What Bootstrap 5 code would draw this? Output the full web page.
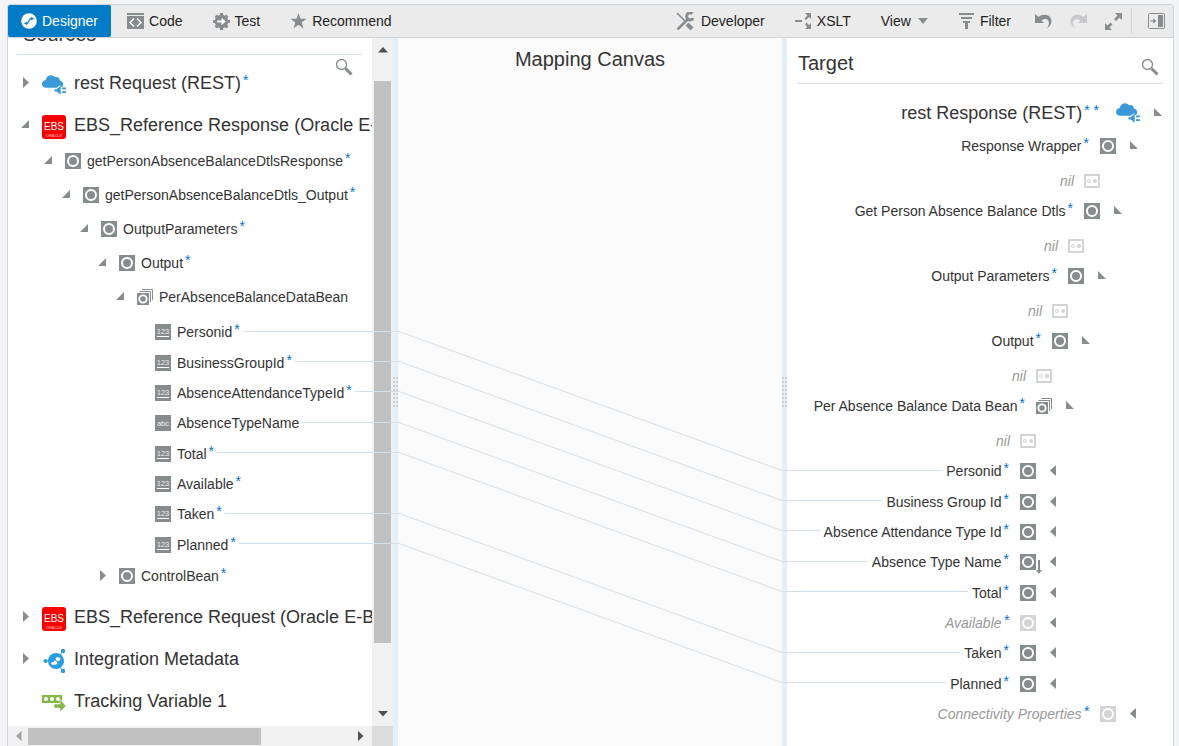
<!DOCTYPE html>
<html lang="en">
<head>
<meta charset="utf-8">
<meta name="viewport" content="width=device-width, initial-scale=1">
<title>Mapper</title>
<link href="https://cdn.jsdelivr.net/npm/bootstrap@5.3.0/dist/css/bootstrap.min.css" rel="stylesheet">
<style>
:root { --ink:#333; --icon:#878c8f; --blue:#0572ce; --edge:#d0d4d7; --wire:#d5dfe7; --scroll:#c1c1c1; }
body { font-family:"Liberation Sans",Arial,sans-serif; font-size:14px; line-height:20px; color:var(--ink); background:#f3f4f6; }
button { border:0; padding:0; background:none; color:inherit; }
svg { display:block; flex:none; }
.mapper { margin:4px 5px 0 7px; border:1px solid var(--edge); border-bottom:0; border-radius:4px 4px 0 0; background:#fff; }
.tools { height:33px; background:#ebebeb; border-bottom:1px solid var(--edge); color:#222; }
.tool { display:flex; align-items:center; gap:5px; height:32px; padding:0 15px; white-space:nowrap; }
.tools-end .tool { gap:6px; }
.tool svg, .glass { color:var(--icon); }
.tool.current { background:#027bc7; color:#fff; padding:0 13px; border-radius:2px; margin-right:1px; }
.tool.current svg { color:#fff; }
.tools-end .tool-small { padding:0 9px; }
.divider { width:1px; height:26px; background:#d3d3d3; }
.source-pane { width:385px; }
.target-pane { width:386px; }
.pane-title { font-size:20px; line-height:24px; font-weight:400; margin:0; }
.source-title { margin:-16px 10px 0 9px; padding:0 6px 8px; border-bottom:1px solid #d3dfe6; }
.source-glass { position:absolute; top:20px; right:19px; }
.target-title { margin:0 10px; padding:12px 4px 7px 1px; border-bottom:1px solid #d8dfe3; }
.splitter { width:5px; background:#e3f0fa; }
.grip { width:5px; height:31px; background:repeating-linear-gradient(#c9ced2 0 2px,transparent 2px 4px); }
.grip::after { content:""; display:block; width:1px; height:31px; margin-left:2px; background:#e3f0fa; }
.canvas { background:#fafafa; }
.canvas .pane-title { padding-top:9px; }
.wires { position:absolute; left:-26px; top:0; width:calc(100% + 31px); height:708px; fill:none; stroke:var(--wire); pointer-events:none; z-index:2; }
.wire { flex:1 1 0; height:1px; background:var(--wire); margin-bottom:2px; }

.tree, .tree ul { list-style:none; margin:0; padding:0; }
.node { display:flex; align-items:center; height:34px; white-space:nowrap; }
.caption { display:flex; gap:2px; }
.caption b { color:var(--blue); font-weight:400; line-height:14px; }
.node svg { color:var(--icon); }
.twist { flex:none; }
.root { font-size:18px; height:38px; }
.root .caption b { font-size:14px; }
.leaves { display:flex; flex-direction:column; height:243px; }
.leaves > li { flex:1; display:flex; flex-direction:column; justify-content:center; }
.leaves .node { height:30px; }

.source-tree { padding:9px 0 0 12px; }
.source-tree > li { margin-bottom:4px; }
.source-tree .twist { width:22px; }
.source-tree .caption { margin-left:6px; }
.source-tree .root .caption { margin-left:8px; }
.source-tree .big { margin-top:4px; }
.source-tree > li > ul { padding:0 0 2px 23px; }
.source-tree ul ul { padding-left:18px; }
.source-tree ul .leaves { padding-left:40px; margin-top:3px; }
.source-tree .wire { margin-left:3px; }
.source-tree .short { height:32px; }

.target-tree { padding:11px 9px 0 0; }
.target-tree .node { height:30px; justify-content:flex-end; }
.target-tree .root { height:36px; }
.target-tree .nil { height:35px; padding:4px 24px 0 0; }
.target-tree .twist { width:24px; padding-left:13px; }
.target-tree .caption { margin-right:11px; }
.target-tree .root .caption { margin-right:17px; }
.target-tree .nil .caption { margin-right:10px; }
.target-tree > li > ul { padding-right:24px; }
.target-tree ul ul { padding-right:16px; }
.target-tree .wire { margin-right:4px; }
.faint { font-style:italic; color:#999; }
.node.faint svg.kind { color:#d2d4d5; }
.sorted { position:relative; }
.sorted .down { position:absolute; left:16px; top:6px; }

.vbar { width:21px; background:#f1f1f1; padding:9px 2px; align-items:center; }
.vbar .thumb { width:17px; height:562px; background:var(--scroll); margin-top:28px; }
.hbar { height:20px; background:#f1f1f1; }
.hbar .thumb { width:233px; height:17px; background:var(--scroll); margin-left:6px; }
.corner { width:21px; height:20px; background:#dcdcdc; }
</style>
</head>
<body class="vh-100 overflow-hidden d-flex flex-column">

<svg class="d-none" aria-hidden="true">
  <symbol id="obj" viewBox="0 0 16 16"><path fill="currentColor" d="M0 0h16v16H0z"/><circle cx="8" cy="8" r="5" fill="none" stroke="#fff" stroke-width="2"/></symbol>
  <symbol id="many" viewBox="0 0 16 16"><path fill="none" stroke="currentColor" d="M5 .5h10.500v10.500M2.500 2.500h11v10.500"/><path fill="currentColor" d="M0 4h12v12H0z"/><circle cx="6" cy="10" r="3.700" fill="none" stroke="#fff" stroke-width="1.800"/></symbol>
  <symbol id="num" viewBox="0 0 16 16"><path fill="currentColor" d="M0 0h16v16H0z"/><path fill="#fff" d="M2 12h12v1H2z"/><text x="8" y="9.500" text-anchor="middle" font-size="7.500" fill="#eee">123</text></symbol>
  <symbol id="abc" viewBox="0 0 16 16"><path fill="currentColor" d="M0 0h16v16H0z"/><text x="8" y="11" text-anchor="middle" font-size="7.500" fill="#eee">abc</text></symbol>
  <symbol id="nilbox" viewBox="0 0 16 14"><path fill="none" stroke="currentColor" stroke-width="2" d="M1 1h14v12H1z"/><circle cx="5" cy="7" r="1.500" fill="none" stroke="currentColor"/><circle cx="11" cy="7" r="2" fill="currentColor"/></symbol>
  <symbol id="open" viewBox="0 0 12 12"><path fill="currentColor" d="M9 1v8H1z"/></symbol>
  <symbol id="shut" viewBox="0 0 12 12"><path fill="currentColor" d="M3 0l6 5.500L3 11z"/></symbol>
  <symbol id="topen" viewBox="0 0 10 12"><path fill="currentColor" d="M1 1v8h8z"/></symbol>
  <symbol id="tshut" viewBox="0 0 10 12"><path fill="currentColor" d="M7 0v11L1 5.500z"/></symbol>
  <symbol id="cloud" viewBox="0 0 24 20"><path fill="#3a99d8" d="M4.500 12.800C1.500 12.800 0 11 0 9 0 6.800 1.500 5.200 3.800 5 4.200 2 6.500.3 9 .3c1.800 0 3 .7 4 1.900C16 1.600 18 3.200 17.800 5.600c2.200.4 3.500 2 3.300 4-.1 1.300-.6 2.100-1.400 2.700L18 10.200 14.600 12.800z"/><path fill="#3a99d8" d="M12.500 14.200h2.200l4-3.700v9.300l-4-3.300h-2.200zM20 12.500h4v1.800h-4zm0 3.700h4V18h-4z"/></symbol>
  <symbol id="ebs" viewBox="0 0 24 24"><rect width="24" height="24" rx="3" fill="#f80000"/><text x="12" y="15" text-anchor="middle" font-size="10" fill="#fff">EBS</text><text x="12" y="22" text-anchor="middle" font-size="4" fill="#fcc">ORACLE</text></symbol>
  <symbol id="meta" viewBox="0 0 24 24"><g fill="#2a9ddf"><circle cx="14" cy="12" r="8"/><circle cx="3.500" cy="12" r="2"/><circle cx="21" cy="2" r="2.200"/><circle cx="21" cy="22" r="2.200"/></g><path stroke="#2a9ddf" d="M3 12h4M21 2l-3 4M21 22l-3-4"/><path fill="#fff" d="M9.500 15v-2h2l1-1.500 2 .5 1 2-1 1.500-4 .5zM13.500 10l1.500-2 2 .5 1.500 1-.5 2-3 .5z"/></symbol>
  <symbol id="track" viewBox="0 0 24 18"><path fill="#84b748" d="M0 1h20v8H0z"/><g fill="#fff"><circle cx="4" cy="5" r="2"/><circle cx="10" cy="5" r="2"/><circle cx="16" cy="5" r="2"/></g><path fill="#84b748" stroke="#fff" stroke-width=".6" d="M12 10h6V5.500l6 6.500-6 6v-4h-6z"/></symbol>
  <symbol id="glass" viewBox="0 0 18 18"><circle cx="6.500" cy="6.500" r="5" fill="none" stroke="currentColor" stroke-width="1.300"/><path stroke="currentColor" stroke-width="3" d="M10.500 10.500l6 6"/></symbol>
</svg>

<main class="mapper flex-grow-1 d-flex flex-column">
  <nav class="tools d-flex align-items-center" aria-label="Mapper tools">
    <button class="tool current"><svg width="16" height="16" viewBox="0 0 17 17"><circle cx="8.500" cy="8.500" r="8.300" fill="currentColor"/><path fill="none" stroke="#1c87d0" stroke-width="1.300" d="M4 11h3l3-5h3"/><path fill="#1c87d0" d="M3 11l3.500-2v4zM14 6l-3.500-2v4z"/></svg>Designer</button>
    <button class="tool"><svg width="17" height="16" viewBox="0 0 17 16"><path fill="currentColor" d="M0 0h17v2H0zM0 3h17v13H0z"/><path fill="none" stroke="#fff" stroke-width="1.300" d="M7 5.500L3 9.500l4 4M10 5.500l4 4-4 4"/></svg>Code</button>
    <button class="tool"><svg width="17" height="17" viewBox="0 0 16 16"><circle cx="8" cy="8" r="6.400" fill="currentColor"/><path stroke="currentColor" stroke-width="3" d="M8 0v16M0 8h16M2.500 2.500l11 11M13.500 2.500l-11 11"/><path fill="#fff" d="M4 7h4V4.500L12 8l-4 3.500V9H4z"/></svg>Test</button>
    <button class="tool"><svg width="17" height="16" viewBox="0 0 16 16"><path fill="currentColor" d="M8 0l2 5.800h6l-4.800 3.700L13 15.500l-5-3.700-5 3.700 1.800-6L0 5.800h6z"/></svg>Recommend</button>
    <div class="tools-end ms-auto d-flex align-items-center">
      <button class="tool"><svg width="19" height="18" viewBox="0 0 19 18"><path fill="none" stroke="currentColor" stroke-width="1.600" d="M1 1l9 9"/><path stroke="currentColor" stroke-width="4" d="M11 12l5 5"/><path stroke="currentColor" stroke-width="2.600" d="M1.500 17.500L12 7"/><path fill="none" stroke="currentColor" stroke-width="3" d="M16.500 1.500a3.600 3.600 0 1 0 .8 4.800"/></svg>Developer</button>
      <button class="tool"><svg width="16" height="16" viewBox="0 0 16 16"><path fill="currentColor" d="M0 7h7v2H0zM10 0h6v6l-2-2-3 3-1.500-1.500 3-3zM10 11l1.500-1.500 2.500 2.500 2-2v6h-6l2-2z"/></svg>XSLT</button>
      <button class="tool">View<svg width="12" height="8" viewBox="0 0 12 8"><path fill="currentColor" d="M1 1h10L6 7z"/></svg></button>
      <button class="tool"><svg width="15" height="16" viewBox="0 0 15 16"><path fill="currentColor" d="M0 0h15v2H0zM2 4h11v2H2zM4 8h7v2H4zM6 12v-2h3v6H6z"/></svg>Filter</button>
      <button class="tool tool-small" aria-label="Undo"><svg width="17" height="16" viewBox="0 0 17 16"><path fill="currentColor" d="M0 1l3.500 3C8 0 16 1 16.500 8c0 3-2 5.500-4.500 7.500 3-5 2.500-9-1.500-9.500-1.500 0-3 .5-4 1.500L9 10H0z"/></svg></button>
      <button class="tool tool-small" aria-label="Redo" disabled><svg width="17" height="16" viewBox="0 0 17 16" opacity=".35"><path fill="currentColor" d="M17 1l-3.500 3C9 0 1 1 .5 8c0 3 2 5.500 4.500 7.500C2 10.500 2.500 6.500 6.500 6c1.500 0 3 .5 4 1.500L8 10h9z"/></svg></button>
      <button class="tool tool-small" aria-label="Expand"><svg width="17" height="17" viewBox="0 0 17 17"><path fill="currentColor" d="M10 0h7v7l-2.500-2.500-3.500 3.500-2-2 3.500-3.500zM0 10l2.500 2.500L5.500 9.500l2 2-3 3L7 17H0z"/></svg></button>
      <span class="divider"></span>
      <button class="tool px-2 ms-2" aria-label="Toggle side panel"><svg width="17" height="17" viewBox="0 0 17 17"><rect x=".5" y=".5" width="16" height="15" rx="1" fill="none" stroke="currentColor"/><path fill="currentColor" d="M10 2h5v12h-5zM2 7.500h3V5.500l3.500 2.500L5 10.500V8.500H2z"/></svg></button>
    </div>
  </nav>

  <div class="flex-grow-1 d-flex overflow-hidden" style="min-height:0">
    <section class="source-pane flex-shrink-0 d-flex flex-column" aria-label="Sources">
      <div class="d-flex flex-grow-1" style="min-height:0">
        <div class="flex-grow-1 overflow-hidden position-relative" style="min-width:0">
          <h2 class="pane-title source-title">Sources</h2>
          <button class="glass source-glass" aria-label="Search sources"><svg width="18" height="18"><use href="#glass"/></svg></button>
          <ul class="tree source-tree">
            <li><div class="node root"><button class="twist" aria-label="Expand"><svg width="12" height="12"><use href="#shut"/></svg></button><svg class="big" width="24" height="20"><use href="#cloud"/></svg><span class="caption">rest Request (REST)<b>*</b></span></div></li>
            <li><div class="node root"><button class="twist" aria-label="Collapse"><svg width="12" height="12"><use href="#open"/></svg></button><svg class="big" width="24" height="24"><use href="#ebs"/></svg><span class="caption">EBS_Reference Response (Oracle E-</span></div>
              <ul>
                <li><div class="node"><button class="twist" aria-label="Collapse"><svg width="12" height="12"><use href="#open"/></svg></button><svg width="16" height="16"><use href="#obj"/></svg><span class="caption">getPersonAbsenceBalanceDtlsResponse<b>*</b></span></div>
                  <ul>
                    <li><div class="node"><button class="twist" aria-label="Collapse"><svg width="12" height="12"><use href="#open"/></svg></button><svg width="16" height="16"><use href="#obj"/></svg><span class="caption">getPersonAbsenceBalanceDtls_Output<b>*</b></span></div>
                      <ul>
                        <li><div class="node"><button class="twist" aria-label="Collapse"><svg width="12" height="12"><use href="#open"/></svg></button><svg width="16" height="16"><use href="#obj"/></svg><span class="caption">OutputParameters<b>*</b></span></div>
                          <ul>
                            <li><div class="node"><button class="twist" aria-label="Collapse"><svg width="12" height="12"><use href="#open"/></svg></button><svg width="16" height="16"><use href="#obj"/></svg><span class="caption">Output<b>*</b></span></div>
                              <ul>
                                <li><div class="node"><button class="twist" aria-label="Collapse"><svg width="12" height="12"><use href="#open"/></svg></button><svg width="16" height="16"><use href="#many"/></svg><span class="caption">PerAbsenceBalanceDataBean</span></div>
                                  <ul class="leaves">
                                    <li><div class="node"><svg width="16" height="16"><use href="#num"/></svg><span class="caption">Personid<b>*</b></span><span class="wire"></span></div></li>
                                    <li><div class="node"><svg width="16" height="16"><use href="#num"/></svg><span class="caption">BusinessGroupId<b>*</b></span><span class="wire"></span></div></li>
                                    <li><div class="node"><svg width="16" height="16"><use href="#num"/></svg><span class="caption">AbsenceAttendanceTypeId<b>*</b></span><span class="wire"></span></div></li>
                                    <li><div class="node"><svg width="16" height="16"><use href="#abc"/></svg><span class="caption">AbsenceTypeName</span><span class="wire"></span></div></li>
                                    <li><div class="node"><svg width="16" height="16"><use href="#num"/></svg><span class="caption">Total<b>*</b></span><span class="wire"></span></div></li>
                                    <li><div class="node"><svg width="16" height="16"><use href="#num"/></svg><span class="caption">Available<b>*</b></span></div></li>
                                    <li><div class="node"><svg width="16" height="16"><use href="#num"/></svg><span class="caption">Taken<b>*</b></span><span class="wire"></span></div></li>
                                    <li><div class="node"><svg width="16" height="16"><use href="#num"/></svg><span class="caption">Planned<b>*</b></span><span class="wire"></span></div></li>
                                  </ul>
                                </li>
                              </ul>
                            </li>
                            <li><div class="node short"><button class="twist" aria-label="Expand"><svg width="12" height="12"><use href="#shut"/></svg></button><svg width="16" height="16"><use href="#obj"/></svg><span class="caption">ControlBean<b>*</b></span></div></li>
                          </ul>
                        </li>
                      </ul>
                    </li>
                  </ul>
                </li>
              </ul>
            </li>
            <li><div class="node root"><button class="twist" aria-label="Expand"><svg width="12" height="12"><use href="#shut"/></svg></button><svg class="big" width="24" height="24"><use href="#ebs"/></svg><span class="caption">EBS_Reference Request (Oracle E-B</span></div></li>
            <li><div class="node root"><button class="twist" aria-label="Expand"><svg width="12" height="12"><use href="#shut"/></svg></button><svg class="big" width="24" height="24"><use href="#meta"/></svg><span class="caption">Integration Metadata</span></div></li>
            <li><div class="node root"><span class="twist"></span><svg class="big" width="24" height="18"><use href="#track"/></svg><span class="caption">Tracking Variable 1</span></div></li>
          </ul>
        </div>
        <div class="vbar d-flex flex-column" aria-hidden="true">
          <svg width="10" height="6" viewBox="0 0 10 6"><path fill="#505050" d="M0 5.500L5 0l5 5.500z"/></svg>
          <div class="thumb"></div>
          <svg class="mt-auto" width="10" height="6" viewBox="0 0 10 6"><path fill="#505050" d="M0 0h10L5 5.500z"/></svg>
        </div>
      </div>
      <div class="d-flex" aria-hidden="true">
        <div class="hbar flex-grow-1 d-flex align-items-center ps-2 pe-2">
          <svg width="6" height="10" viewBox="0 0 6 10"><path fill="#a3a3a3" d="M5.500 0v10L0 5z"/></svg>
          <div class="thumb"></div>
          <svg class="ms-auto" width="6" height="10" viewBox="0 0 6 10"><path fill="#505050" d="M0 0v10l5.500-5z"/></svg>
        </div>
        <div class="corner"></div>
      </div>
    </section>

    <div class="splitter flex-shrink-0 d-flex align-items-center"><div class="grip"></div></div>

    <section class="canvas flex-grow-1 position-relative" aria-label="Mapping Canvas">
      <h2 class="pane-title text-center">Mapping Canvas</h2>
      <svg class="wires" viewBox="0 0 415 708" preserveAspectRatio="none" aria-hidden="true">
        <path vector-effect="non-scaling-stroke" d="M0 293.500H27L410 432.500H415M0 323.500H27L410 462.500H415M0 353.500H27L410 492.500H415M0 384.500H27L410 523.500H415M0 414.500H27L410 553.500H415M0 475.500H27L410 614.500H415M0 505.500H27L410 644.500H415"/>
      </svg>
    </section>

    <div class="splitter flex-shrink-0 d-flex align-items-center"><div class="grip"></div></div>

    <section class="target-pane flex-shrink-0" aria-label="Target">
      <div class="target-title d-flex justify-content-between align-items-center">
        <h2 class="pane-title">Target</h2>
        <button class="glass pt-2" aria-label="Search target"><svg width="18" height="18"><use href="#glass"/></svg></button>
      </div>
      <ul class="tree target-tree">
        <li><div class="node root"><span class="caption">rest Response (REST)<b>* *</b></span><svg width="24" height="20"><use href="#cloud"/></svg><button class="twist" aria-label="Collapse"><svg width="10" height="12"><use href="#topen"/></svg></button></div>
          <ul>
            <li><div class="node"><span class="caption">Response Wrapper<b>*</b></span><svg width="16" height="16"><use href="#obj"/></svg><button class="twist" aria-label="Collapse"><svg width="10" height="12"><use href="#topen"/></svg></button></div>
              <ul>
                <li><div class="node nil faint"><span class="caption">nil</span><svg class="kind" width="16" height="14"><use href="#nilbox"/></svg></div></li>
                <li><div class="node"><span class="caption">Get Person Absence Balance Dtls<b>*</b></span><svg width="16" height="16"><use href="#obj"/></svg><button class="twist" aria-label="Collapse"><svg width="10" height="12"><use href="#topen"/></svg></button></div>
                  <ul>
                    <li><div class="node nil faint"><span class="caption">nil</span><svg class="kind" width="16" height="14"><use href="#nilbox"/></svg></div></li>
                    <li><div class="node"><span class="caption">Output Parameters<b>*</b></span><svg width="16" height="16"><use href="#obj"/></svg><button class="twist" aria-label="Collapse"><svg width="10" height="12"><use href="#topen"/></svg></button></div>
                      <ul>
                        <li><div class="node nil faint"><span class="caption">nil</span><svg class="kind" width="16" height="14"><use href="#nilbox"/></svg></div></li>
                        <li><div class="node"><span class="caption">Output<b>*</b></span><svg width="16" height="16"><use href="#obj"/></svg><button class="twist" aria-label="Collapse"><svg width="10" height="12"><use href="#topen"/></svg></button></div>
                          <ul>
                            <li><div class="node nil faint"><span class="caption">nil</span><svg class="kind" width="16" height="14"><use href="#nilbox"/></svg></div></li>
                            <li><div class="node"><span class="caption">Per Absence Balance Data Bean<b>*</b></span><svg width="16" height="16"><use href="#many"/></svg><button class="twist" aria-label="Collapse"><svg width="10" height="12"><use href="#topen"/></svg></button></div>
                              <ul>
                                <li><div class="node nil faint"><span class="caption">nil</span><svg class="kind" width="16" height="14"><use href="#nilbox"/></svg></div></li>
                              </ul>
                              <ul class="leaves">
                                <li><div class="node"><span class="wire"></span><span class="caption">Personid<b>*</b></span><svg width="16" height="16"><use href="#obj"/></svg><button class="twist" aria-label="Expand"><svg width="10" height="12"><use href="#tshut"/></svg></button></div></li>
                                <li><div class="node"><span class="wire"></span><span class="caption">Business Group Id<b>*</b></span><svg width="16" height="16"><use href="#obj"/></svg><button class="twist" aria-label="Expand"><svg width="10" height="12"><use href="#tshut"/></svg></button></div></li>
                                <li><div class="node"><span class="wire"></span><span class="caption">Absence Attendance Type Id<b>*</b></span><svg width="16" height="16"><use href="#obj"/></svg><button class="twist" aria-label="Expand"><svg width="10" height="12"><use href="#tshut"/></svg></button></div></li>
                                <li><div class="node"><span class="wire"></span><span class="caption">Absence Type Name<b>*</b></span><span class="sorted"><svg width="16" height="16"><use href="#obj"/></svg><svg class="down" width="6" height="14" viewBox="0 0 6 14"><path fill="currentColor" d="M2 0h2v10h2l-3 4-3-4h2z"/></svg></span><button class="twist" aria-label="Expand"><svg width="10" height="12"><use href="#tshut"/></svg></button></div></li>
                                <li><div class="node"><span class="wire"></span><span class="caption">Total<b>*</b></span><svg width="16" height="16"><use href="#obj"/></svg><button class="twist" aria-label="Expand"><svg width="10" height="12"><use href="#tshut"/></svg></button></div></li>
                                <li><div class="node faint"><span class="caption">Available<b>*</b></span><svg class="kind" width="16" height="16"><use href="#obj"/></svg><button class="twist" aria-label="Expand"><svg width="10" height="12"><use href="#tshut"/></svg></button></div></li>
                                <li><div class="node"><span class="wire"></span><span class="caption">Taken<b>*</b></span><svg width="16" height="16"><use href="#obj"/></svg><button class="twist" aria-label="Expand"><svg width="10" height="12"><use href="#tshut"/></svg></button></div></li>
                                <li><div class="node"><span class="wire"></span><span class="caption">Planned<b>*</b></span><svg width="16" height="16"><use href="#obj"/></svg><button class="twist" aria-label="Expand"><svg width="10" height="12"><use href="#tshut"/></svg></button></div></li>
                              </ul>
                            </li>
                          </ul>
                        </li>
                      </ul>
                    </li>
                  </ul>
                </li>
              </ul>
            </li>
            <li><div class="node faint"><span class="caption">Connectivity Properties<b>*</b></span><svg class="kind" width="16" height="16"><use href="#obj"/></svg><button class="twist" aria-label="Expand"><svg width="10" height="12"><use href="#tshut"/></svg></button></div></li>
          </ul>
        </li>
      </ul>
    </section>
  </div>
</main>
<script src="https://cdn.jsdelivr.net/npm/bootstrap@5.3.0/dist/js/bootstrap.bundle.min.js"></script>
</body>
</html>
